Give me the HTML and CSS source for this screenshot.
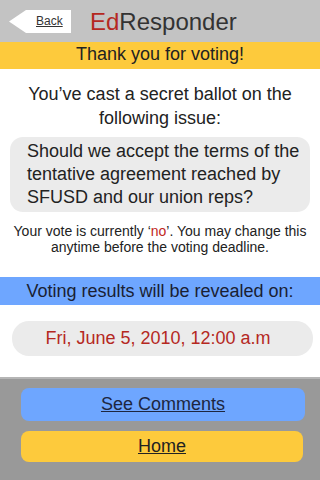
FILE: index.html
```html
<!DOCTYPE html>
<html>
<head>
<meta charset="utf-8">
<link rel="stylesheet" href="styles.css">
</head>
<body>
<div class="page">
  <header class="topbar">
    <a class="back" href="#">
      <svg class="back-shape" width="62" height="23" viewBox="0 0 62 23"><polygon points="0,11.5 17,0 62,0 62,23 17,23" fill="#fff"/></svg>
      <span class="back-label">Back</span>
    </a>
    <h1 class="brand"><span class="ed">Ed</span>Responder</h1>
  </header>
  <div class="thanks">Thank you for voting!</div>
  <main class="content">
    <p class="intro">You’ve cast a secret ballot on the following issue:</p>
    <div class="issue">Should we accept the terms of the tentative agreement reached by SFUSD and our union reps?</div>
    <p class="note">Your vote is currently ‘<span class="red">no</span>’. You may change this anytime before the voting deadline.</p>
    <div class="reveal">Voting results will be revealed on:</div>
    <div class="date">Fri, June 5, 2010, 12:00 a.m</div>
  </main>
  <footer class="footer">
    <a class="btn btn-blue" href="#">See Comments</a>
    <a class="btn btn-yellow" href="#">Home</a>
  </footer>
</div>
</body>
</html>
```
FILE: styles.css
```css
html, body {
  margin: 0;
  padding: 0;
  background: #fff;
}
body {
  font-family: "Liberation Sans", Arial, sans-serif;
  color: #222;
}
.page {
  width: 320px;
  height: 480px;
  display: flex;
  flex-direction: column;
  overflow: hidden;
}
.topbar {
  height: 42px;
  background: #c3c3c3;
  display: flex;
  align-items: center;
  box-sizing: border-box;
  padding-left: 9px;
}
.back {
  position: relative;
  width: 62px;
  height: 23px;
  display: block;
  margin-top: 1px;
  color: #333;
}
.back-shape {
  display: block;
}
.back-label {
  position: absolute;
  left: 27px;
  top: 4px;
  font-size: 12px;
  line-height: 14px;
  text-decoration: underline;
  color: #333;
}
.brand {
  margin: 2px 0 0 19px;
  font-size: 24px;
  font-weight: normal;
  line-height: 28px;
  color: #333;
}
.ed {
  color: #b5281f;
}
.thanks {
  height: 27px;
  box-sizing: border-box;
  padding-bottom: 2px;
  background: #fdca3c;
  text-align: center;
  font-size: 18px;
  line-height: 25px;
  color: #222;
}
.content {
  flex: 1;
  display: flex;
  flex-direction: column;
}
.intro {
  margin: 13px 20px 0;
  text-align: center;
  font-size: 18px;
  line-height: 24px;
  color: #222;
}
.issue {
  margin: 7px 10px 0;
  padding: 3px 8px 3px 17px;
  background: #ebebeb;
  border-radius: 13px;
  font-size: 18px;
  line-height: 23px;
  color: #222;
}
.note {
  margin: 11px 4px 0;
  text-align: center;
  font-size: 14px;
  line-height: 16px;
  color: #222;
}
.red {
  color: #c1271d;
}
.reveal {
  margin-top: 22px;
  height: 28px;
  background: #6ea6ff;
  text-align: center;
  font-size: 18px;
  line-height: 28px;
  color: #1a1f33;
}
.date {
  margin: 16px 7px 0 12px;
  height: 35px;
  background: #ebebeb;
  border-radius: 17px;
  text-align: center;
  font-size: 18px;
  line-height: 35px;
  color: #b5281f;
  padding-right: 9px;
}
.footer {
  height: 103px;
  box-sizing: border-box;
  background: #999;
  border-top: 2px solid #b5b5b5;
  padding: 9px 15px 0 21px;
  display: flex;
  flex-direction: column;
  gap: 10px;
}
.btn {
  display: block;
  height: 33px;
  border-radius: 8px;
  text-align: center;
  font-size: 18px;
  line-height: 33px;
  text-decoration: underline;
}
.btn-blue {
  background: #6ea6ff;
  color: #1d2640;
}
.btn-yellow {
  background: #fdca3c;
  color: #222;
  height: 31px;
  line-height: 31px;
  margin-right: 2px;
}
```
